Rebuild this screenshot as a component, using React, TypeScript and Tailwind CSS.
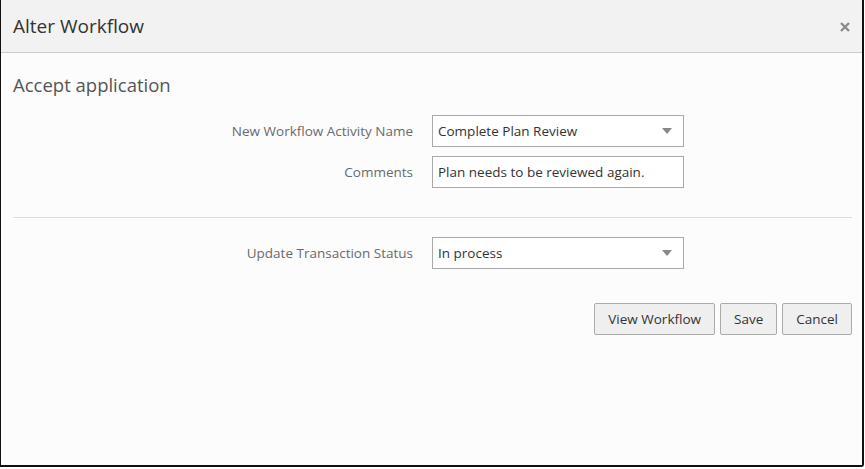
const font = { fontFamily: '"Open Sans", "Noto Sans", sans-serif' };

function SelectBox({ value }: { value: string }) {
  return (
    <div className="flex h-8 w-[252px] items-center justify-between border border-[#a9a9a9] bg-white pl-[5px] pr-[11px] text-[13.5px] text-[#333]">
      <span>{value}</span>
      <svg width="10" height="6" viewBox="0 0 10 6" className="mt-px">
        <path d="M0 0h10L5 6z" fill="#888" />
      </svg>
    </div>
  );
}

function Row({ label, children }: { label: string; children: React.ReactNode }) {
  return (
    <div className="flex items-center">
      <label className="w-[400px] shrink-0 text-right text-[13.5px] text-[#6a6a6a]">{label}</label>
      <div className="ml-[19px]">{children}</div>
    </div>
  );
}

export default function App() {
  return (
    <div className="h-[469px] w-[865px] bg-white" style={font}>
      <div className="flex h-[467px] w-[864px] flex-col overflow-hidden rounded-br-[3px] border-b-2 border-l border-r-2 border-[#111] bg-[#fcfcfc]">
        {/* Header */}
        <div className="flex h-[53px] shrink-0 items-center justify-between border-b border-[#cccccc] bg-[#f2f2f2] pl-3 pr-[12px]">
          <h1 className="text-[19px] text-[#333]">Alter Workflow</h1>
          <button className="mt-[2px] p-0">
            <svg width="10" height="10" viewBox="0 0 10 10">
              <path d="M1 1l8 8M9 1l-8 8" stroke="#8a8a8a" strokeWidth="2.4" />
            </svg>
          </button>
        </div>

        {/* Body */}
        <div className="pl-3 pr-[10px] pt-[18px]">
          <h2 className="text-[18.5px] text-[#555]">Accept application</h2>

          <div className="mt-[16px] flex flex-col gap-[9px]">
            <Row label="New Workflow Activity Name">
              <SelectBox value="Complete Plan Review" />
            </Row>
            <Row label="Comments">
              <input
                defaultValue="Plan needs to be reviewed again."
                className="h-8 w-[252px] border border-[#a9a9a9] bg-white px-[5px] text-[13.5px] text-[#333] outline-none"
              />
            </Row>
          </div>

          <hr className="mt-[29px] border-[#dddddd]" />

          <div className="mt-[19px]">
            <Row label="Update Transaction Status">
              <SelectBox value="In process" />
            </Row>
          </div>

          <div className="mt-[34px] flex justify-end gap-[5px]">
            <button className="h-8 rounded-[2px] border border-[#ababab] bg-[#efefef] px-[13px] text-[13.5px] text-[#333]">
              View Workflow
            </button>
            <button className="h-8 rounded-[2px] border border-[#ababab] bg-[#efefef] px-[13px] text-[13.5px] text-[#333]">
              Save
            </button>
            <button className="h-8 rounded-[2px] border border-[#ababab] bg-[#efefef] px-[13px] text-[13.5px] text-[#333]">
              Cancel
            </button>
          </div>
        </div>
      </div>
    </div>
  );
}
